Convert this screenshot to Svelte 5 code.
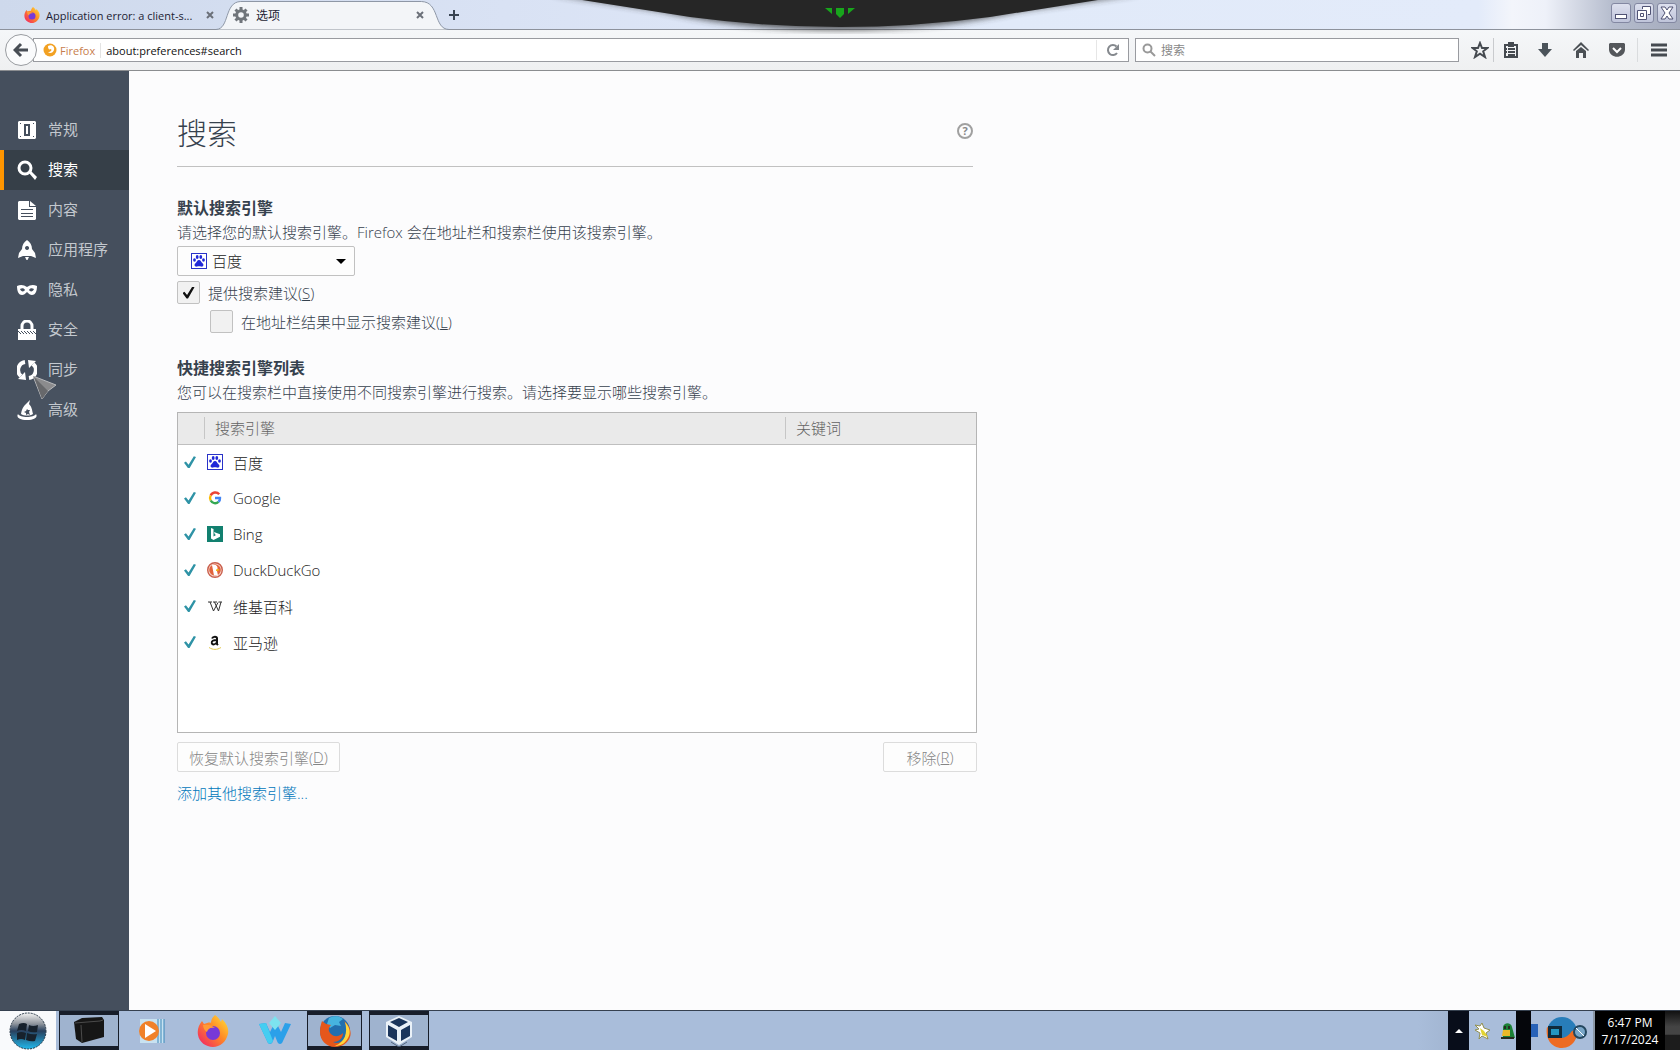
<script lang="ts">
  interface Category {
    id: string;
    label: string;
  }

  interface Engine {
    id: string;
    name: string;
    shown: boolean;
  }

  const categories: Category[] = [
    { id: 'general', label: '常规' },
    { id: 'search', label: '搜索' },
    { id: 'content', label: '内容' },
    { id: 'applications', label: '应用程序' },
    { id: 'privacy', label: '隐私' },
    { id: 'security', label: '安全' },
    { id: 'sync', label: '同步' },
    { id: 'advanced', label: '高级' },
  ];

  let engines: Engine[] = $state([
    { id: 'baidu', name: '百度', shown: true },
    { id: 'google', name: 'Google', shown: true },
    { id: 'bing', name: 'Bing', shown: true },
    { id: 'ddg', name: 'DuckDuckGo', shown: true },
    { id: 'wiki', name: '维基百科', shown: true },
    { id: 'amazon', name: '亚马逊', shown: true },
  ]);

  let current = $state('search');
  let suggest = $state(true);
  let suggestInUrl = $state(false);
</script>

{#snippet categoryIcon(id: string)}
  <svg class="category-icon" viewBox="0 0 20 20" fill="#fff">
    {#if id === 'general'}
      <path fill-rule="evenodd" d="M2 1h16l1 1v16l-1 1H2l-1-1V2zM7 4v12h6V4zM3 3v1h1V3zm13 0v1h1V3zM3 16v1h1v-1zm13 0v1h1v-1zM9 6h2v8H9z" />
    {:else if id === 'search'}
      <circle cx="8" cy="8" r="6" fill="none" stroke="#fff" stroke-width="3" />
      <path d="M12 13l2-2 6 6-2 3z" />
    {:else if id === 'content'}
      <path fill-rule="evenodd" d="M2 1h10v6h7v12l-1 1H2l-1-1V2zM4 9v1h12V9zm0 4v1h12v-1zm0 3v1h12v-1z" />
      <path d="M13 1l6 5h-6z" />
    {:else if id === 'applications'}
      <path fill-rule="evenodd" d="M10 0c3 2 5 5 5 9l3 4 1 5-5-2H6l-5 2 1-5 3-4c0-4 2-7 5-9zM10 6a2 2 0 1 0 .1 0z" />
      <path d="M8 17h4l-2 4z" />
    {:else if id === 'privacy'}
      <path fill-rule="evenodd" d="M0 6c4-2 7-1 10 1 3-2 6-3 10-1 0 6-2 9-5 9-2 0-3-1-5-3-2 2-3 3-5 3-3 0-5-3-5-9zM3 9c1 3 4 3 5 1-1-2-3-2-5-1zm14 0c-2-1-4-1-5 1 1 2 4 2 5-1z" />
    {:else if id === 'security'}
      <path d="M5 9V6a5 5 0 0 1 10 0v3" fill="none" stroke="#fff" stroke-width="3" />
      <path d="M1 9h18v11H1z" />
      <path d="M1 11l3 3m0-3l3 3m0-3l3 3m0-3l3 3m0-3l3 3m0-3l3 3" stroke="#454f5d" />
    {:else if id === 'sync'}
      <path d="M8 2a8 8 0 0 0-4 14M12 18a8 8 0 0 0 4-14" fill="none" stroke="#fff" stroke-width="4" />
      <path d="M1 19l8 1-1-8zM19 1l-8-1 1 8z" />
    {:else}
      <path fill-rule="evenodd" d="M4 14C5 8 7 6 9 4l4-4-1 4c3 3 3 6 4 10-3 2-9 2-12 0zM10 9l-1 2-2 1 2 1v2l2-1 2 1-1-3 1-2h-2z" />
      <path d="M1 14c2 4 16 4 18 0 2 3-1 6-9 6s-11-3-9-6z" />
    {/if}
  </svg>
{/snippet}

{#snippet engineIcon(id: string)}
  <svg class="engine-icon" viewBox="0 0 16 16">
    {#if id === 'baidu'}
      <rect x=".5" y=".5" width="15" height="15" fill="#fff" stroke="#2932c8" />
      <g fill="#2028d8">
        <ellipse cx="3.5" cy="7" rx="1.4" ry="1.8" />
        <ellipse cx="6.2" cy="4" rx="1.4" ry="1.9" />
        <ellipse cx="9.8" cy="4" rx="1.4" ry="1.9" />
        <ellipse cx="12.5" cy="7" rx="1.4" ry="1.8" />
        <path d="M8 7c2 0 2 2 3.500 3.200C13.500 12 12 14 10 13.600c-1.500-.4-2.500-.4-4 0C4 14 2.500 12 4.500 10.200 6 9 6 7 8 7z" />
      </g>
    {:else if id === 'google'}
      <g fill="none" stroke-width="2.4">
        <path d="M12.200 4.300A5 5 0 0 0 3.700 5.500" stroke="#ea4335" />
        <path d="M3.700 5.500a5 5 0 0 0 0 5" stroke="#fbbc05" />
        <path d="M3.700 10.500a5 5 0 0 0 7.800 1.400" stroke="#34a853" />
        <path d="M8 8h5a5 5 0 0 1-1.500 3.900" stroke="#4285f4" />
      </g>
    {:else if id === 'bing'}
      <path fill="#12806f" d="M0 0h16v16H0z" />
      <path fill="#fff" d="M4 2l2.500 1v7.500l2.500-1.500-1.200-.7L7 6l6 2.200v2.600L6.500 14 4 12.500z" />
    {:else if id === 'ddg'}
      <circle cx="8" cy="8" r="7.300" fill="#f7d9d0" stroke="#c95f4c" stroke-width="1.400" />
      <circle cx="8" cy="8" r="5.800" fill="#e2633c" />
      <path fill="#fff" d="M5 3c4-1 6 1 5.500 4L10 9l1 4.500H7z" />
      <path fill="#f2b705" d="M9 7.500l3-.5v1.500L9 9z" />
    {:else if id === 'wiki'}
      <path d="M1 4h4M6 4h4M11.500 4H15M3 4l3.500 9L11 4.500M7.500 4l4 9L14 4" fill="none" stroke="#333" />
    {:else}
      <path d="M5 4.500C6 2 10 2 10 4.500V10l1 1M10 6C6 6 4.500 7 4.800 9c.4 2 4 2 5.200-1" fill="none" stroke="#111" stroke-width="2" />
      <path d="M2 13.500c4 2.500 8 2.500 12 0" fill="none" stroke="#e3c94f" />
    {/if}
  </svg>
{/snippet}

{#snippet foxIcon(kind: string)}
  <svg class="fox" viewBox="0 0 32 32">
    {#if kind === 'new'}
      <defs>
        <linearGradient id="fox-new" x1="1" y1="0" x2="0" y2="1">
          <stop offset="0" stop-color="#ffe83a" />
          <stop offset=".45" stop-color="#ff8a26" />
          <stop offset="1" stop-color="#f0186c" />
        </linearGradient>
      </defs>
      <path fill="url(#fox-new)" d="M18 0c4 3 5 5 6 7l1-3c5 5 7 10 6 15-2 8-8 13-15 13S2 27 1 20C0 14 2 10 5 6l2 3c3-1 6-2 7-1 0-4 2-6 4-8z" />
      <circle cx="16" cy="18" r="7" fill="#7739d8" />
      <path fill="#ff9a36" d="M6 10c5-1 9 0 12 3-5-1-7 1-8 4-2-1-4-4-4-7z" />
    {:else}
      <circle cx="16" cy="16" r="15" fill="#226fae" />
      <path fill="#46b4df" d="M10 3c5-3 11-2 14 1l-4 3 2 4-6-1-5 3-3-4z" />
      <path fill="#e5571b" d="M3 6l4 3 5 1c-3 3-3 6 0 9 4 4 9 2 12-1 0 6-5 9-10 9 6 3 13-2 14-8 1-5-1-10-3-13 5 4 8 10 6 16-2 6-8 10-15 10C7 32 1 25 1 17 1 12 2 9 3 6z" />
      <path fill="#ffd63b" d="M26 7c5 5 6 11 3 16-3 6-8 8-13 8 10-4 13-13 10-24z" />
    {/if}
  </svg>
{/snippet}

<div class="desktop">
  <header class="tab-strip">
    <div class="tab background-tab">
      <span class="tab-icon">{@render foxIcon('new')}</span>
      <span class="tab-title">Application error: a client-s...</span>
      <button class="tab-close" aria-label="关闭标签页">
        <svg viewBox="0 0 8 8"><path d="M1 1l6 6M7 1L1 7" /></svg>
      </button>
    </div>
    <div class="tab active-tab">
      <svg class="tab-shape" viewBox="0 0 236 30" preserveAspectRatio="none">
        <path d="M0 29.500C14 29 8 2 25 1.500H208C227 2 220 29 236 29.500" fill="#f3f5f8" stroke="#8d96a5" />
      </svg>
      <svg class="gear" viewBox="0 0 16 16">
        <circle cx="8" cy="8" r="4.300" fill="none" stroke="#70757b" stroke-width="3" />
        <path d="M8 0v3M8 13v3M0 8h3M13 8h3M2.500 2.500l2 2M11.500 11.500l2 2M13.500 2.500l-2 2M4.500 11.500l-2 2" stroke="#70757b" stroke-width="3" />
      </svg>
      <span class="tab-title">选项</span>
      <button class="tab-close" aria-label="关闭标签页">
        <svg viewBox="0 0 8 8"><path d="M1 1l6 6M7 1L1 7" /></svg>
      </button>
    </div>
    <button class="new-tab" aria-label="新建标签页">
      <svg viewBox="0 0 10 10"><path d="M5 0v10M0 5h10" stroke="#394452" stroke-width="2" /></svg>
    </button>

    <svg class="drawer" viewBox="0 0 600 34">
      <defs>
        <filter id="drawer-shadow" x="-5%" y="-30%" width="110%" height="180%">
          <feGaussianBlur stdDeviation="3" />
        </filter>
      </defs>
      <path d="M10 -6L120 11Q200 30 300 30T480 11L600 -6z" fill="#333" filter="url(#drawer-shadow)" opacity=".8" />
      <path d="M42 0L150 17Q225 27 300 27T450 17L558 0z" fill="#262626" />
      <path d="M296 8h8v6l-4 4-4-4zM285 8h7v6zM315 8h-7v6z" fill="#18a51c" />
    </svg>

    <div class="window-buttons">
      <button aria-label="最小化">
        <svg viewBox="0 0 16 16"><rect x="2.500" y="9.500" width="11" height="4" /></svg>
      </button>
      <button aria-label="还原">
        <svg viewBox="0 0 16 16"><path d="M6.500 4V1.500h8v8H12M1.500 5.500h9v9h-9zM4.500 8.500h3v3h-3z" /></svg>
      </button>
      <button aria-label="关闭">
        <svg viewBox="0 0 16 16"><path d="M2 2h4l2 3 2-3h4l-4 6 4 6h-4l-2-3-2 3H2l4-6z" /></svg>
      </button>
    </div>
  </header>

  <div class="toolbar">
    <button class="back" aria-label="后退">
      <svg viewBox="0 0 16 16"><path d="M8 2L2 8l6 6M2.500 8H15" fill="none" stroke="#474d54" stroke-width="3" /></svg>
    </button>
    <div class="url-box">
      <svg class="identity-icon" viewBox="0 0 14 14">
        <circle cx="7" cy="7" r="6.500" fill="#f2a122" />
        <path d="M5 3c4-2 7 1 6 4s-4 4-6 2c3 0 4-2 3-3-2 1-3 0-3-3z" fill="#fff" />
      </svg>
      <span class="identity">Firefox</span>
      <input type="text" aria-label="地址" value="about:preferences#search" />
      <button class="reload" aria-label="刷新">
        <svg viewBox="0 0 14 14">
          <path d="M10.500 3.500A5 5 0 1 0 11 10" fill="none" stroke="#85898e" stroke-width="2" />
          <path d="M13 1v6H7z" fill="#85898e" />
        </svg>
      </button>
    </div>
    <div class="search-box">
      <svg viewBox="0 0 14 14">
        <path d="M8.500 8.500L13 13" stroke="#999" stroke-width="2" />
        <circle cx="5.500" cy="5.500" r="4" fill="none" stroke="#999" stroke-width="2" />
      </svg>
      <input type="text" aria-label="搜索" placeholder="搜索" />
    </div>
    <button class="tool star" aria-label="收藏">
      <svg viewBox="0 0 18 18"><path d="M9 2l2 5h5.500l-4.300 3.300L14 16l-5-3.400L4 16l1.800-5.700L1.500 7H7z" fill="none" stroke="#454a50" stroke-width="2" /></svg>
    </button>
    <button class="tool clipboard" aria-label="书签">
      <svg viewBox="0 0 18 18">
        <path d="M3 4h12v12H3zM6 8h7M6 11h7M6 14h7M3 8h2M3 11h2" fill="none" stroke="#454a50" stroke-width="2" />
        <path d="M6 1h6v5H6z" fill="#454a50" />
      </svg>
    </button>
    <button class="tool" aria-label="下载">
      <svg viewBox="0 0 18 18"><path d="M6 2h6v6h4l-7 8-7-8h4z" fill="#4b535a" /></svg>
    </button>
    <button class="tool" aria-label="主页">
      <svg viewBox="0 0 18 18"><path d="M9 1l8 8-1 1-7-6-7 6-1-1zM4 10l5-4 5 4v7h-3v-5H7v5H4z" fill="#4b5055" /></svg>
    </button>
    <button class="tool" aria-label="Pocket">
      <svg viewBox="0 0 18 18">
        <path d="M2 2h14l1 1v6c-1 9-15 9-16 0V3z" fill="#54575b" />
        <path d="M5 7l4 4 4-4" fill="none" stroke="#fff" stroke-width="2" />
      </svg>
    </button>
    <button class="tool menu" aria-label="菜单">
      <svg viewBox="0 0 18 18"><path d="M1 4h16M1 9h16M1 14h16" stroke="#454a50" stroke-width="3" /></svg>
    </button>
  </div>

  <div class="page">
    <nav class="categories">
      {#each categories as category}
        <a
          class="category {category.id}"
          class:selected={category.id === current}
          href={`#${category.id}`}
          aria-current={category.id === current ? 'page' : undefined}
          onclick={() => (current = category.id)}
        >
          {@render categoryIcon(category.id)}
          <span>{category.label}</span>
          {#if category.id === 'sync'}
            <svg class="pointer" viewBox="0 0 24 24">
              <path d="M0 0l23 9-8 6-6 8z" fill="#8b8b8d" stroke="#b9bbbd" />
              <path d="M1 1l14 14-6 8z" fill="#67686b" />
            </svg>
          {/if}
        </a>
      {/each}
    </nav>

    <main class="main">
      <div class="content">
        <div class="title-row">
          <h1>搜索</h1>
          <button class="help" aria-label="帮助">?</button>
        </div>

        <section class="default-engine">
          <h2>默认搜索引擎</h2>
          <p>请选择您的默认搜索引擎。Firefox 会在地址栏和搜索栏使用该搜索引擎。</p>
          <div class="engine-select">
            {@render engineIcon('baidu')}
            <select aria-label="默认搜索引擎">
              {#each engines as engine}
                <option value={engine.id}>{engine.name}</option>
              {/each}
            </select>
          </div>
          <label class="check-row">
            <input type="checkbox" class="box" bind:checked={suggest} />
            <span>提供搜索建议(<u>S</u>)</span>
          </label>
          <label class="check-row nested">
            <input type="checkbox" class="box" bind:checked={suggestInUrl} />
            <span>在地址栏结果中显示搜索建议(<u>L</u>)</span>
          </label>
        </section>

        <section class="one-click">
          <h2>快捷搜索引擎列表</h2>
          <p>您可以在搜索栏中直接使用不同搜索引擎进行搜索。请选择要显示哪些搜索引擎。</p>
          <div class="engine-list">
            <table>
              <thead>
                <tr>
                  <th class="col-shown"><i></i></th>
                  <th class="col-name"><i>搜索引擎</i></th>
                  <th><i>关键词</i></th>
                </tr>
              </thead>
              <tbody>
                {#each engines as engine}
                  <tr>
                    <td><input type="checkbox" class="tick" aria-label={engine.name} bind:checked={engine.shown} /></td>
                    <td>
                      <div class="engine">
                        {@render engineIcon(engine.id)}
                        <span>{engine.name}</span>
                      </div>
                    </td>
                    <td></td>
                  </tr>
                {/each}
              </tbody>
            </table>
          </div>
          <div class="actions">
            <button disabled>恢复默认搜索引擎(<u>D</u>)</button>
            <button class="remove" disabled>移除(<u>R</u>)</button>
          </div>
          <a class="add-engines" href="#add">添加其他搜索引擎...</a>
        </section>
      </div>
    </main>
  </div>

  <footer class="taskbar">
    <button class="start" aria-label="开始">
      <svg viewBox="0 0 38 38">
        <defs>
          <linearGradient id="orb" x1="0" y1="0" x2="0" y2="1">
            <stop offset="0" stop-color="#f4f4f4" />
            <stop offset=".3" stop-color="#8e949c" />
            <stop offset=".5" stop-color="#28405e" />
            <stop offset="1" stop-color="#20b8ec" />
          </linearGradient>
        </defs>
        <circle cx="19" cy="19" r="18" fill="url(#orb)" stroke="#263646" stroke-dasharray="2 1" />
        <path d="M10 12q5-2 8 0l-1 7q-5-2-9 0zM20 13q4 2 9 0l-1 7q-5 1-9-1zM8 21q4-2 9 0l-1 7q-4-2-8 0zM18 21q5 2 10 1l-2 7q-4 1-9-1z" fill="#17212c" />
      </svg>
    </button>
    <button class="task open" aria-label="文件夹">
      <svg viewBox="0 0 32 32">
        <path d="M1 7l8-4 20-1 2 3v17L9 28l-6-4z" fill="#161616" />
        <path d="M2 8l25-2 3-1M8 10l1 17" fill="none" stroke="#4b4b4b" />
      </svg>
    </button>
    <button class="task" aria-label="媒体播放器">
      <svg viewBox="0 0 32 32">
        <path d="M5 4h24v24H5z" fill="#c8e2f1" />
        <path d="M23 4v24M26 4v24M29 4v24" stroke="#3b87b8" />
        <circle cx="14" cy="16" r="10" fill="#f08129" />
        <path d="M10 9l11 7-11 7z" fill="#fff" />
      </svg>
    </button>
    <button class="task" aria-label="Firefox">{@render foxIcon('new')}</button>
    <button class="task" aria-label="Waterfox">
      <svg viewBox="0 0 32 32">
        <path d="M0 9l7-1 4 9 4-8h3l4 8 4-9 6 1-8 17c-1 4-5 4-6 0l-2-5-2 5c-1 4-5 4-6 0z" fill="#2ba0e9" />
        <path d="M16 1l6 7-6 7-6-7z" fill="#7de3ef" />
        <path d="M0 9l7-1 7 18c-2 4-5 3-6 0z" fill="#45cdf1" />
      </svg>
    </button>
    <button class="task open running" aria-label="Firefox">{@render foxIcon('old')}</button>
    <button class="task open" aria-label="VirtualBox">
      <svg viewBox="0 0 32 32">
        <path d="M16 1l13 6v15l-13 8L3 22V7z" fill="#eaf1f8" />
        <path d="M16 3l9 4-9 5-9-5zM5 10l9 5v11l-9-5zM27 10l-9 5v11l9-5z" fill="#1b355b" />
        <path d="M8 27l8 5 8-5" fill="none" stroke="#53657e" />
      </svg>
    </button>
    <div class="tray">
      <div class="tray-dark">
        <svg viewBox="0 0 8 8"><path d="M0 6l4-4 4 4z" fill="#fff" /></svg>
      </div>
      <div class="tray-icons">
        <svg viewBox="0 0 18 18">
          <path d="M1 3l5 1 2-3 2 5 6 2-4 3 2 6-6-3-3 3 1-6-5-3 4-1z" fill="#fff" stroke="#92904f" />
          <path d="M6 6l4 3 4 6-6-2z" fill="#e2d431" />
        </svg>
        <svg viewBox="0 0 18 18">
          <path d="M5 16V5c1-5 8-5 9 0l3 11z" fill="#1c8136" />
          <path d="M5 8h7v6H4z" fill="#ecb929" />
          <path d="M6 4h2v3H6zM10 4h2v3h-2zM3 15h13v2H3z" fill="#272c20" />
        </svg>
      </div>
      <div class="tray-gap"></div>
      <div class="tray-fox">
        <svg viewBox="0 0 60 34">
          <circle cx="31" cy="18" r="15" fill="#287db9" />
          <path d="M16 13l7 5c3 8 12 8 18-1l5-2c1 9-4 19-15 19s-17-10-15-21z" fill="#ed6b22" />
          <path d="M17 12h14v12H17z" fill="#102b3c" />
          <path d="M20 15h8v6h-8z" fill="#2496c0" />
          <path d="M0 10h7v13H0z" fill="#2862b8" />
          <circle cx="49" cy="18" r="6" fill="#79a6c8" stroke="#24475f" stroke-width="2" />
          <path d="M45 14l8 8" stroke="#fff" />
        </svg>
      </div>
      <div class="clock">
        <span>6:47 PM</span>
        <span>7/17/2024</span>
      </div>
      <div class="show-desktop"></div>
    </div>
  </footer>
</div>

<style>
  :global(body) {
    margin: 0;
    background: #fcfcfd;
  }

  .desktop {
    display: flex;
    flex-direction: column;
    min-height: 100vh;
    font-family: "Open Sans", "Noto Sans CJK SC", sans-serif;
    font-size: 15px;
    color: #36414d;
  }

  .desktop * {
    box-sizing: border-box;
  }

  svg {
    display: block;
    flex: none;
  }

  button {
    display: flex;
    align-items: center;
    justify-content: center;
    padding: 0;
    border: 0;
    background: none;
    font: inherit;
    color: inherit;
  }

  input,
  select {
    margin: 0;
    font: inherit;
    color: inherit;
  }

  /* Tab strip */
  .tab-strip {
    position: relative;
    display: flex;
    height: 30px;
    border-bottom: 1px solid #8d929c;
    background: linear-gradient(90deg, #ced9ec 0, #d9e2f4 30%, #e1eaf9 60%, #e3ebfa 88%, #f3f5fb 90%, #eef1f9 92%, #b5bccd 96%, #a5abbd 100%);
    font-size: 11px;
    color: #1d1d33;
  }

  .tab {
    position: relative;
    display: flex;
    align-items: center;
    height: 30px;
  }

  .background-tab {
    width: 216px;
    gap: 6px;
    padding-left: 24px;
  }

  .active-tab {
    width: 233px;
    gap: 7px;
    padding-left: 17px;
    font-size: 12px;
  }

  .tab-shape {
    position: absolute;
    inset: 0;
    width: 100%;
    height: 100%;
  }

  .gear {
    position: relative;
    width: 16px;
    height: 16px;
  }

  .tab-icon {
    flex: none;
    width: 16px;
    height: 16px;
  }

  .fox {
    width: 100%;
    height: 100%;
  }

  .tab-title {
    position: relative;
    flex: 1;
    white-space: nowrap;
  }

  .tab-close {
    position: relative;
    width: 8px;
    height: 8px;
    margin-right: 2px;
  }

  .active-tab .tab-close {
    margin-right: 25px;
  }

  .tab-close svg {
    width: 8px;
    height: 8px;
    stroke: #6b7079;
    stroke-width: 2;
  }

  .new-tab svg {
    width: 10px;
    height: 10px;
  }

  .drawer {
    position: absolute;
    z-index: 2;
    top: 0;
    left: calc(50% - 300px);
    width: 600px;
    height: 34px;
  }

  .window-buttons {
    display: flex;
    gap: 3px;
    margin-left: auto;
    padding: 3px 3px 0 0;
  }

  .window-buttons button {
    width: 20px;
    height: 20px;
    border: 1px solid #8388a2;
    border-radius: 3px;
    background: linear-gradient(#dde0ee, #bfc4da);
  }

  .window-buttons svg {
    width: 16px;
    height: 16px;
    fill: #fff;
    stroke: #505374;
  }

  /* Navigation toolbar */
  .toolbar {
    display: flex;
    align-items: center;
    height: 41px;
    padding: 0 9px 0 5px;
    border-bottom: 1px solid #8b8d90;
    background: linear-gradient(#f5f7f9, #eff0f1);
    font-size: 11px;
  }

  .back {
    z-index: 1;
    width: 32px;
    height: 32px;
    border: 1px solid #999ca0;
    border-radius: 50%;
    background: #fafbfc;
  }

  .back svg {
    width: 16px;
    height: 16px;
  }

  .url-box,
  .search-box {
    display: flex;
    align-items: center;
    height: 24px;
    border: 1px solid #999ba0;
    background: #fff;
  }

  .url-box {
    flex: 1;
    margin-left: -4px;
    padding-left: 9px;
  }

  .identity-icon {
    width: 14px;
    height: 14px;
  }

  .identity {
    margin-left: 3px;
    padding-right: 5px;
    border-right: 1px solid #e3e3e3;
    color: #c77d4c;
  }

  .url-box input,
  .search-box input {
    flex: 1;
    min-width: 0;
    padding: 0 5px;
    border: 0;
    background: none;
    outline: 0;
    color: #111;
  }

  .reload {
    width: 32px;
    height: 20px;
    border-left: 1px solid #e6e6e6;
  }

  .reload svg,
  .search-box svg {
    width: 14px;
    height: 14px;
  }

  .search-box {
    width: 324px;
    margin: 0 8px 0 6px;
    padding-left: 6px;
    font-size: 12px;
  }

  .search-box input::placeholder {
    color: #888;
    opacity: 1;
  }

  .tool {
    width: 36px;
    height: 24px;
  }

  .tool svg {
    width: 18px;
    height: 18px;
  }

  .star {
    width: 26px;
  }

  .clipboard {
    width: 34px;
    border-left: 1px solid #c9cbce;
  }

  .menu {
    width: 34px;
    margin-left: 2px;
    border-left: 1px solid #dadcde;
    padding-left: 8px;
  }

  /* Preferences page */
  .page {
    display: flex;
    flex: 1;
    background: #fcfcfd;
  }

  .categories {
    width: 129px;
    padding-top: 39px;
    background: #454f5d;
  }

  .category {
    position: relative;
    display: flex;
    align-items: center;
    gap: 11px;
    height: 40px;
    padding-left: 13px;
    border-left: 4px solid transparent;
    color: #c3c8ce;
    text-decoration: none;
  }

  .category span {
    padding-bottom: 4px;
  }

  .category.selected {
    border-left-color: #ff9500;
    background: #363f48;
    color: #fff;
  }

  .category.advanced {
    background: #485260;
  }

  .category-icon {
    width: 20px;
    height: 20px;
  }

  .pointer {
    position: absolute;
    z-index: 1;
    top: 26px;
    left: 29px;
    width: 24px;
    height: 24px;
  }

  .main {
    flex: 1;
    padding: 38px 48px 40px;
  }

  .content {
    max-width: 800px;
  }

  .title-row {
    display: flex;
    align-items: center;
    justify-content: space-between;
    height: 58px;
    margin-right: 4px;
    padding: 0 0 10px;
    border-bottom: 1px solid #c1c1c1;
  }

  h1 {
    margin: 0;
    font-size: 30px;
    font-weight: 300;
    line-height: 40px;
  }

  .help {
    width: 16px;
    height: 16px;
    margin-bottom: 4px;
    border: 2px solid #a0a0a0;
    border-radius: 50%;
    font-size: 11px;
    font-weight: 700;
    line-height: 12px;
    color: #888;
  }

  section {
    display: flex;
    flex-direction: column;
    align-items: flex-start;
  }

  h2 {
    margin: 0;
    font-size: 16px;
    font-weight: 600;
    line-height: 24px;
  }

  p {
    margin: 0;
    line-height: 24px;
    font-weight: 300;
  }

  .default-engine {
    margin-top: 29px;
  }

  .engine-select {
    position: relative;
    width: 178px;
    margin-top: 2px;
  }

  .engine-select::after {
    content: '';
    position: absolute;
    top: 13px;
    right: 9px;
    border: 5px solid transparent;
    border-top-color: #000;
    border-bottom: 0;
    pointer-events: none;
  }

  .engine-select .engine-icon {
    position: absolute;
    top: 7px;
    left: 14px;
  }

  .engine-icon {
    width: 16px;
    height: 16px;
  }

  select {
    display: block;
    appearance: none;
    width: 100%;
    height: 30px;
    padding: 0 30px 0 34px;
    border: 1px solid #c1c1c1;
    border-radius: 2px;
    background: #fdfdfd;
    color: #222;
    font-weight: 300;
  }

  .check-row {
    display: flex;
    align-items: center;
    gap: 8px;
    height: 23px;
    margin-top: 5px;
    font-weight: 300;
  }

  .nested {
    margin-top: 6px;
    margin-left: 33px;
  }

  .box {
    appearance: none;
    display: grid;
    place-items: center;
    width: 23px;
    height: 23px;
    border: 1px solid #c1c1c1;
    border-radius: 2px;
    background: #f1f1f1;
  }

  .box:checked::after,
  .tick:checked::after {
    content: '';
    width: 12px;
    height: 12px;
    background: #111;
    clip-path: polygon(0 55%, 16% 44%, 38% 70%, 82% 0, 100% 6%, 46% 100%, 34% 100%);
  }

  .one-click {
    margin-top: 23px;
  }

  .engine-list {
    width: 100%;
    height: 321px;
    margin-top: 8px;
    border: 1px solid #b5b5b5;
    background: #fff;
  }

  table {
    width: 100%;
    border-collapse: collapse;
    table-layout: fixed;
    font-weight: 300;
    color: #222;
  }

  th {
    height: 31px;
    padding: 0;
    border-bottom: 1px solid #bfbfbf;
    background: #eaeaea;
    font-weight: 300;
    text-align: left;
    color: #636363;
  }

  th i {
    display: block;
    height: 22px;
    padding-left: 10px;
    font-style: normal;
    line-height: 22px;
  }

  th + th i {
    border-left: 1px solid #c6c6c6;
  }

  .col-shown {
    width: 26px;
  }

  .col-name {
    width: 581px;
  }

  td {
    height: 36px;
    padding: 0;
  }

  .tick {
    appearance: none;
    display: grid;
    width: 12px;
    height: 12px;
    margin-left: 6px;
  }

  .tick:checked::after {
    background: #2f93a6;
  }

  .engine {
    display: flex;
    align-items: center;
    gap: 10px;
    padding-left: 3px;
  }

  .actions {
    display: flex;
    justify-content: space-between;
    width: 100%;
    margin-top: 9px;
  }

  .actions button {
    height: 30px;
    padding: 0 11px;
    border: 1px solid #dcdcdc;
    border-radius: 2px;
    background: #fdfdfd;
    font-weight: 300;
    color: #858585;
  }

  .actions .remove {
    width: 94px;
  }

  .add-engines {
    margin-top: 9px;
    line-height: 24px;
    font-weight: 300;
    color: #0077bb;
    text-decoration: none;
  }

  /* Taskbar */
  .taskbar {
    display: flex;
    height: 40px;
    border-top: 1px solid #35404f;
    background: #a9bdda;
  }

  .start {
    width: 56px;
    margin-right: 3px;
    background: #f9fafc;
  }

  .start svg {
    width: 38px;
    height: 38px;
  }

  .task {
    width: 60px;
    margin-right: 2px;
  }

  .task svg,
  .task .fox {
    width: 32px;
    height: 32px;
  }

  .task.open {
    border: solid #171d29;
    border-width: 4px 1px;
    background: #9fb3cf;
  }

  .task.running {
    width: 55px;
    margin-right: 7px;
  }

  .tray {
    display: flex;
    margin-left: auto;
    background: linear-gradient(90deg, #a9bdda, #6e8197);
    padding-left: 30px;
  }

  .tray-dark {
    display: flex;
    align-items: center;
    width: 21px;
    padding-left: 7px;
    background: #080d1a;
  }

  .tray-dark svg {
    width: 8px;
    height: 8px;
  }

  .tray-icons {
    display: flex;
    align-items: center;
    gap: 6px;
    width: 47px;
    padding-left: 5px;
    background: #a9bdda;
  }

  .tray-icons svg {
    width: 18px;
    height: 18px;
  }

  .tray-gap {
    width: 15px;
    background: #05060b;
  }

  .tray-fox {
    display: flex;
    align-items: center;
    width: 62px;
    background: #a9bdda;
  }

  .tray-fox svg {
    width: 60px;
    height: 34px;
  }

  .clock {
    display: flex;
    flex-direction: column;
    align-items: center;
    justify-content: center;
    width: 72px;
    border-left: 2px solid #8c98a6;
    background: #000;
    color: #fff;
    font-size: 12px;
    line-height: 17px;
  }

  .show-desktop {
    width: 15px;
    background: linear-gradient(#111 0, #444 40%, #444 60%, #1c1c1c 61%);
  }
</style>
